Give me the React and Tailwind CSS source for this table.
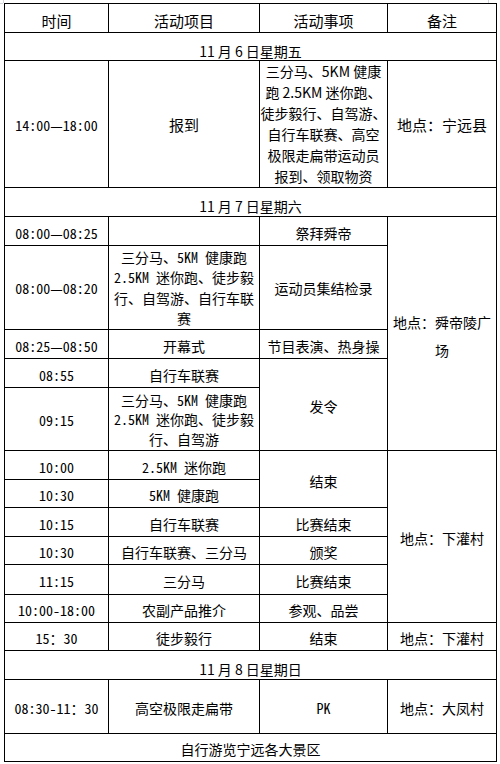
import React from "react";

const M = "font-['Noto_Sans_Mono_CJK_SC','Noto_Sans_CJK_SC',monospace]";
const S = "font-['Noto_Sans_CJK_SC','Noto_Sans',sans-serif]";

function C({ children, className = "" }) {
  return (
    <div className={"bg-white flex items-center justify-center text-center text-[14px] text-black " + className}>
      <div>{children}</div>
    </div>
  );
}

export default function App() {
  return (
    <div className="relative w-[500px] h-[764px] bg-white pt-[3px] pl-[4px]">
      <div className="absolute left-0 top-[3px] w-[3px] h-px bg-gray-300" />
      <div className="absolute left-[3px] top-0 w-px h-[3px] bg-gray-300" />
      <div className="absolute left-[488px] top-0 w-px h-[3px] bg-gray-300" />
      <div className="grid w-fit bg-black gap-px p-px grid-cols-[103px_150px_127px_108px] grid-rows-[28px_27px_126px_28px_28px_83px_28px_28px_62px_28px_27px_28px_27px_29px_27px_27px_28px_53px_27px] leading-[20px]">
        {/* header */}
        <C className={S + " pt-[6px] text-[15px]"}>时间</C>
        <C className={S + " pt-[6px] text-[15px]"}>活动项目</C>
        <C className={S + " pt-[6px] text-[15px]"}>活动事项</C>
        <C className={S + " pt-[6px] text-[15px]"}>备注</C>

        {/* Nov 6 */}
        <C className={S + " col-span-4 pt-[8px] text-[14px]"}>11 月 6 日星期五</C>
        <C className={M + " pt-[2px]"}>14:00—18:00</C>
        <C className={S + " pt-[2px] text-[15px]"}>报到</C>
        <C className={S + " leading-[21px] whitespace-nowrap text-[14px]"}>
          三分马、5KM 健康<br />跑 2.5KM 迷你跑、<br />徒步毅行、自驾游、<br />自行车联赛、高空<br />极限走扁带运动员<br />报到、领取物资
        </C>
        <C className={S + " pt-[2px] text-[15px]"}>地点：宁远县</C>

        {/* Nov 7 */}
        <C className={S + " col-span-4 pt-[8px]"}>11 月 7 日星期六</C>
        <C className={M + " pt-[3px]"}>08:00—08:25</C>
        <C className={M}>{""}</C>
        <C className={M + " pt-[3px]"}>祭拜舜帝</C>
        <C className={M + " row-span-5 leading-[28px] pt-[4px]"}>地点：舜帝陵广<br />场</C>

        <C className={M + " pt-[1px]"}>08:00—08:20</C>
        <C className={M + " leading-[20.5px]"}>三分马、5KM 健康跑<br />2.5KM 迷你跑、徒步毅<br />行、自驾游、自行车联<br />赛</C>
        <C className={M + " pt-[1px]"}>运动员集结检录</C>

        <C className={M + " pt-[3px]"}>08:25—08:50</C>
        <C className={M + " pt-[3px]"}>开幕式</C>
        <C className={M + " pt-[3px]"}>节目表演、热身操</C>

        <C className={M + " pt-[3px]"}>08:55</C>
        <C className={M + " pt-[3px]"}>自行车联赛</C>
        <C className={M + " row-span-2 pt-[2px]"}>发令</C>

        <C className={M + " pt-[2px]"}>09:15</C>
        <C className={M + " leading-[19.5px] pt-[2px]"}>三分马、5KM 健康跑<br />2.5KM 迷你跑、徒步毅<br />行、自驾游</C>

        <C className={M + " pt-[3px]"}>10:00</C>
        <C className={M + " pt-[3px]"}>2.5KM 迷你跑</C>
        <C className={M + " row-span-2 pt-[3px]"}>结束</C>
        <C className={M + " row-span-6 pt-[3px]"}>地点：下灌村</C>

        <C className={M + " pt-[3px]"}>10:30</C>
        <C className={M + " pt-[3px]"}>5KM 健康跑</C>

        <C className={M + " pt-[3px]"}>10:15</C>
        <C className={M + " pt-[3px]"}>自行车联赛</C>
        <C className={M + " pt-[3px]"}>比赛结束</C>

        <C className={M + " pt-[3px]"}>10:30</C>
        <C className={M + " pt-[3px]"}>自行车联赛、三分马</C>
        <C className={M + " pt-[3px]"}>颁奖</C>

        <C className={M + " pt-[3px]"}>11:15</C>
        <C className={M + " pt-[3px]"}>三分马</C>
        <C className={M + " pt-[3px]"}>比赛结束</C>

        <C className={M + " pt-[3px]"}>10:00-18:00</C>
        <C className={M + " pt-[3px]"}>农副产品推介</C>
        <C className={M + " pt-[3px]"}>参观、品尝</C>

        <C className={M + " pt-[3px]"}>15：30</C>
        <C className={M + " pt-[3px]"}>徒步毅行</C>
        <C className={M + " pt-[3px]"}>结束</C>
        <C className={M + " pt-[3px]"}>地点：下灌村</C>

        {/* Nov 8 */}
        <C className={S + " col-span-4 pt-[8px]"}>11 月 8 日星期日</C>
        <C className={M + " pt-[3px]"}>08:30-11：30</C>
        <C className={M + " pt-[3px]"}>高空极限走扁带</C>
        <C className={M + " pt-[3px] text-[13px]"}>PK</C>
        <C className={M + " pt-[3px]"}>地点：大凤村</C>

        <C className={M + " col-span-4 pt-[3px]"}>自行游览宁远各大景区</C>
      </div>
    </div>
  );
}
